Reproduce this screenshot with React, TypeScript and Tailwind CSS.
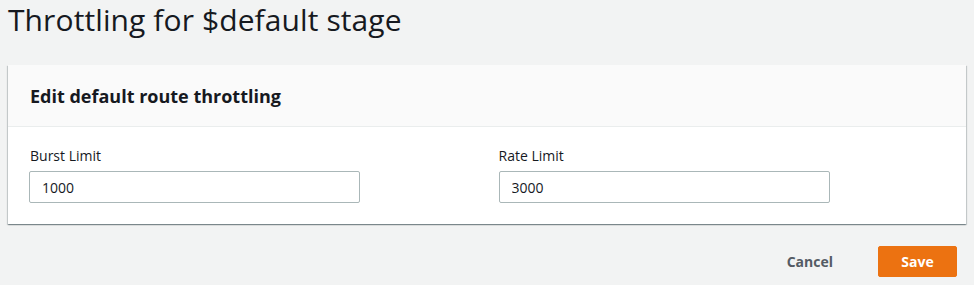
export default function App() {
	return (
		<div className="w-[974px] h-[285px] bg-[#f2f3f3] font-['Open_Sans',sans-serif] text-[#16191f] overflow-hidden">
			<h1 className="pl-2 text-[30px] leading-[40px] font-normal tracking-[0.1px]">Throttling for $default stage</h1>
			<div className="mt-[25px] mx-2 w-[958px] bg-white shadow-[0_1px_1px_0_rgba(0,28,36,0.3),1px_1px_1px_0_rgba(0,28,36,0.15),-1px_1px_1px_0_rgba(0,28,36,0.15)]">
				<div className="h-[62px] px-[22px] flex items-center bg-[#fafafa] border-b border-[#eaeded]">
					<h2 className="text-[18px] font-bold leading-[22px]">Edit default route throttling</h2>
				</div>
				<div className="px-[21px] pt-[18px] pb-[21px] grid grid-cols-2 gap-x-[23px]">
					<div>
						<label className="block pl-px text-[14px] leading-[22px] mb-[4px]">Burst Limit</label>
						<input
							readOnly
							value="1000"
							className="w-[331px] h-[32px] px-[12px] text-[14px] border border-[#aab7b8] rounded-[2px] bg-white outline-none"
						/>
					</div>
					<div>
						<label className="block text-[14px] leading-[22px] mb-[4px]">Rate Limit</label>
						<input
							readOnly
							value="3000"
							className="w-[331px] h-[32px] px-[12px] text-[14px] border border-[#aab7b8] rounded-[2px] bg-white outline-none"
						/>
					</div>
				</div>
			</div>
			<div className="flex justify-end items-center mt-[22px] pr-[17px] gap-[25px]">
				<button className="px-[20px] h-[31px] text-[14px] font-bold text-[#545b64]">Cancel</button>
				<button className="w-[79px] h-[31px] text-[14px] font-bold text-white bg-[#ec7211] rounded-[2px] border border-[#ec7211]">
					Save
				</button>
			</div>
		</div>
	);
}
